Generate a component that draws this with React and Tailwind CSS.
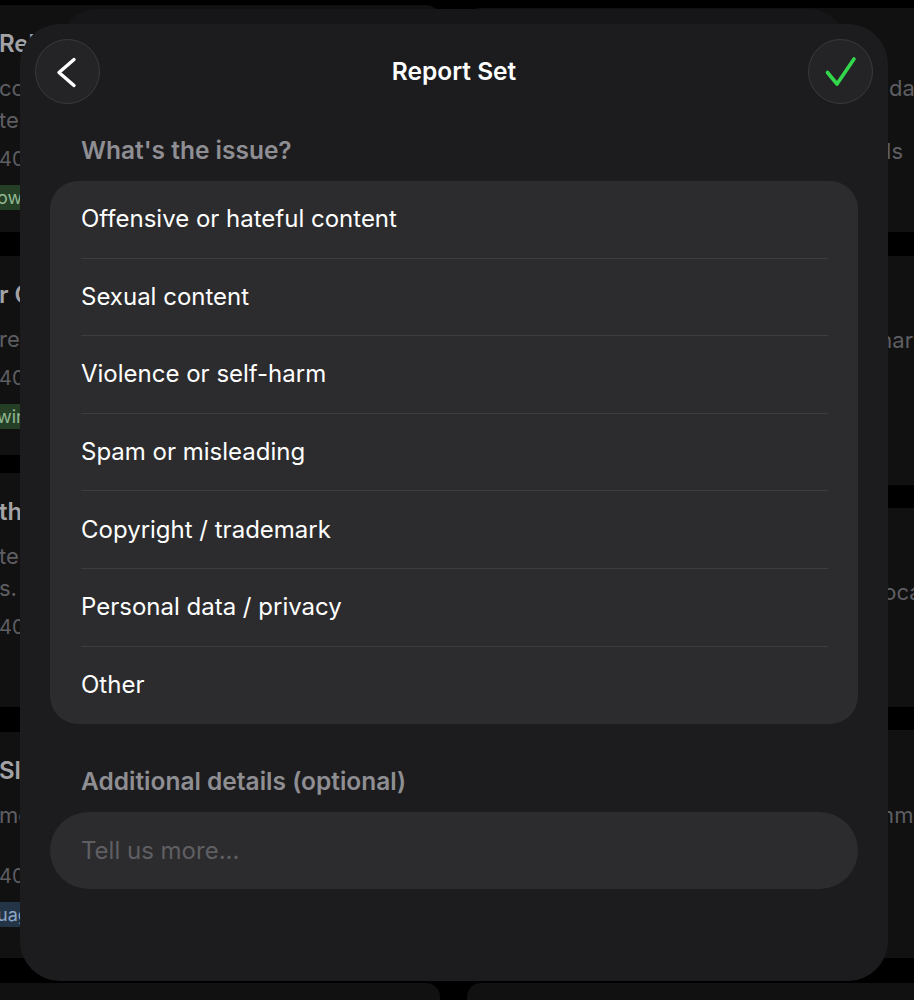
// Modules
import React from "react";

const reasons = [
    "Offensive or hateful content",
    "Sexual content",
    "Violence or self-harm",
    "Spam or misleading",
    "Copyright / trademark",
    "Personal data / privacy",
    "Other",
];

// Cards of the page that sits behind the sheet (mostly hidden)
const leftCards = [
    { h: "h-[227px]", mt: "mt-[5px]", title: "Relaxing Evening", lines: ["ccompanied chords", "tempo practice"], meta: "40 min", tag: "ow Tempo", tagColor: "green" },
    { h: "h-[199px]", mt: "mt-[24px]", title: "r Chords", lines: ["repeat each shape"], meta: "40 min", tag: "winging", tagColor: "green" },
    { h: "h-[234px]", mt: "mt-[18px]", title: "th Hand", lines: ["ternate picking", "s."], meta: "40 min" },
    { h: "h-[226px]", mt: "mt-[25px]", title: "Slap Basics", lines: ["method drills"], meta: "", meta2: "40 min", tag: "uage", tagColor: "blue" },
    { h: "h-[200px]", mt: "mt-[25px]", title: "", lines: [] },
];

const rightCards = [
    { h: "h-[224px]", mt: "mt-[8px]", lines: [{ t: "Practice every day", cls: "mt-[67px]" }, { t: "12 skills", cls: "mt-[37px] text-[18px] pr-[24px]" }] },
    { h: "h-[229px]", mt: "mt-[24px]", lines: [{ t: "Seminar", cls: "mt-[71px] pr-[14px]" }] },
    { h: "h-[199px]", mt: "mt-[23px]", lines: [{ t: "Focus on vocal", cls: "mt-[71px]" }] },
    { h: "h-[228px]", mt: "mt-[23px]", lines: [{ t: "Recommended", cls: "mt-[72px] -mr-[52px]" }] },
    { h: "h-[200px]", mt: "mt-[25px]", lines: [] },
];

function LeftCard({ card }) {
    return (
        <div className={`${card.h} ${card.mt} shrink-0 rounded-[14px] bg-[#111112] pl-[15px] pt-[22px] overflow-hidden`}>
            {card.title && <div className="text-[24px] leading-[34px] font-semibold text-[#a3a3a6] whitespace-nowrap">{card.title}</div>}
            <div className="mt-[14px] flex flex-col gap-[6px]">
                {card.lines.map((l) => (
                    <div key={l} className="text-[22px] leading-[26px] text-[#5e5e62] whitespace-nowrap">{l}</div>
                ))}
            </div>
            {card.meta && <div className="mt-[14px] text-[20px] leading-[24px] text-[#5e5e62]">{card.meta}</div>}
            {card.meta2 && <div className="mt-[36px] text-[20px] leading-[24px] text-[#5e5e62]">{card.meta2}</div>}
            {card.tag && (
                <div className={`mt-[14px] -ml-[6px] inline-flex h-[25px] items-center rounded-[4px] pl-[4px] pr-2 text-[18px] whitespace-nowrap ${card.tagColor === "green" ? "bg-[#253f27] text-[#8fb88f]" : "bg-[#243447] text-[#8ea6c4]"}`}>
                    {card.tag}
                </div>
            )}
        </div>
    );
}

function RightCard({ card }) {
    return (
        <div className={`${card.h} ${card.mt} shrink-0 rounded-[14px] bg-[#111112] pr-[10px] flex flex-col items-end overflow-hidden`}>
            {card.lines.map((l) => (
                <div key={l.t} className={`text-[22px] leading-[26px] text-[#5e5e62] whitespace-nowrap ${l.cls}`}>{l.t}</div>
            ))}
        </div>
    );
}

function ChevronLeft() {
    return (
        <svg width="40" height="40" viewBox="0 0 40 40" fill="none">
            <path d="M26 7.5 L11 20.5 L26 33.5" stroke="#ffffff" strokeWidth="3.4" strokeLinecap="round" strokeLinejoin="round" />
        </svg>
    );
}

function CheckMark() {
    return (
        <svg width="40" height="40" viewBox="0 0 40 40" fill="none">
            <path d="M6.5 20.5 L16 32 L33 7" stroke="#32d74b" strokeWidth="3.6" strokeLinecap="round" strokeLinejoin="round" />
        </svg>
    );
}

export default function App() {
    return (
        <div className="relative h-[1000px] w-full overflow-hidden bg-black font-[Inter,'Noto_Sans',sans-serif]">

            {/* Page behind */}
            <div className="flex h-full gap-[27px]">
                <div className="flex w-[456px] shrink-0 flex-col -ml-[16px]">
                    {leftCards.map((c, i) => <LeftCard key={i} card={c} />)}
                </div>
                <div className="flex w-[470px] shrink-0 flex-col">
                    {rightCards.map((c, i) => <RightCard key={i} card={c} />)}
                </div>
            </div>

            {/* Stacked sheet behind */}
            <div className="absolute left-[60px] top-[9px] h-[120px] w-[786px] rounded-[36px] bg-[#161618]" />

            {/* Report sheet */}
            <div className="absolute left-[20px] top-[24px] flex h-[957px] w-[868px] flex-col rounded-[40px] bg-[#1c1c1e] px-[30px]">
                <div className="-mx-[15px] mt-[15px] flex items-center justify-between">
                    <button className="flex h-[65px] w-[65px] items-center justify-center rounded-full border border-[#3a3a3d] bg-[#242426]">
                        <ChevronLeft />
                    </button>
                    <div className="text-[24.5px] font-semibold text-white">Report Set</div>
                    <button className="flex h-[65px] w-[65px] items-center justify-center rounded-full border border-[#3a3a3d] bg-[#242426]">
                        <CheckMark />
                    </button>
                </div>

                <div className="mt-[31px] pl-[31px] text-[24.5px] leading-[30px] font-semibold text-[#8e8e93]">What's the issue?</div>

                <div className="mt-[16px] flex flex-col rounded-[28px] bg-[#2c2c2e] pl-[31px] pr-[30px]">
                    {reasons.map((r, i) => (
                        <div key={r} className={`flex h-[77.6px] items-center ${i < reasons.length - 1 ? "border-b border-[#3d3d40]" : ""}`}>
                            <span className="text-[24px] text-white">{r}</span>
                        </div>
                    ))}
                </div>

                <div className="mt-[42px] pl-[31px] text-[24.5px] leading-[30px] font-semibold text-[#8e8e93]">Additional details (optional)</div>

                <input
                    className="mt-[16px] h-[77px] w-full rounded-full bg-[#2c2c2e] pl-[31px] text-[24px] text-white outline-none placeholder:text-[#5f5f63]"
                    placeholder="Tell us more..."
                />
            </div>
        </div>
    );
}
